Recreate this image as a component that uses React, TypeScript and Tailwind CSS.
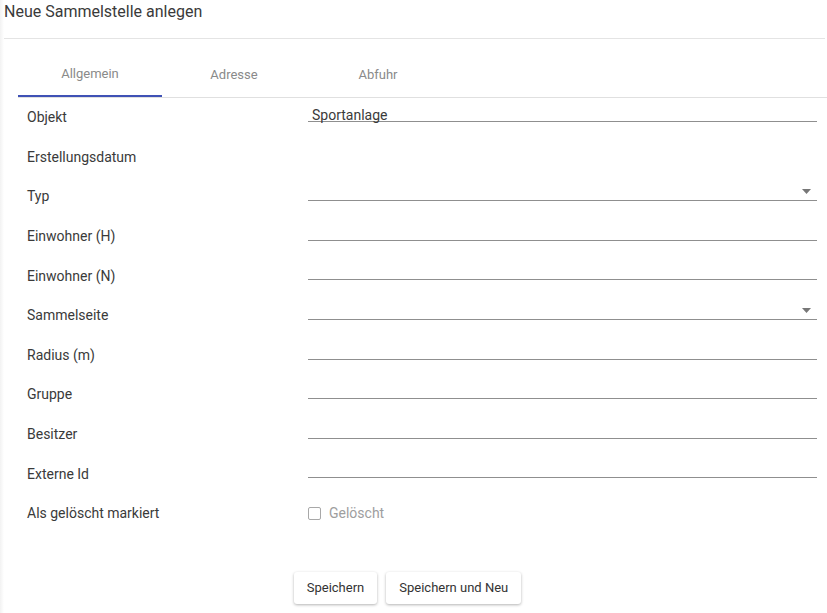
import React from "react";

const rows: { label: string; kind: "text" | "none" | "select" | "check"; value?: string }[] = [
  { label: "Objekt", kind: "text", value: "Sportanlage" },
  { label: "Erstellungsdatum", kind: "none" },
  { label: "Typ", kind: "select" },
  { label: "Einwohner (H)", kind: "text" },
  { label: "Einwohner (N)", kind: "text" },
  { label: "Sammelseite", kind: "select" },
  { label: "Radius (m)", kind: "text" },
  { label: "Gruppe", kind: "text" },
  { label: "Besitzer", kind: "text" },
  { label: "Externe Id", kind: "text" },
  { label: "Als gelöscht markiert", kind: "check" },
];

function Field({ row }: { row: (typeof rows)[number] }) {
  if (row.kind === "none") return <div className="flex-1" />;
  if (row.kind === "check") {
    return (
      <div className="flex flex-1 items-center h-full">
        <span className="w-[13px] h-[13px] border-[1.5px] border-[#a8a8a8] rounded-[2px] bg-white" />
        <span className="ml-[8px] text-[14px] text-[#9e9e9e]">Gelöscht</span>
      </div>
    );
  }
  return (
    <div className="flex-1 self-start h-[24px] border-b border-[#8f8f8f] relative flex items-end">
      {row.value ? (
        <span className="pl-[4px] text-[14px] leading-[14px] text-[#3a3a3a] translate-y-[1px]">{row.value}</span>
      ) : null}
      {row.kind === "select" ? (
        <svg className="absolute right-[6px] bottom-[6px]" width="9" height="5" viewBox="0 0 9 5">
          <path d="M0 0 L9 0 L4.5 5 Z" fill="#777" />
        </svg>
      ) : null}
    </div>
  );
}

export default function App() {
  return (
    <div
      className="w-[827px] h-[613px] bg-white relative overflow-hidden text-[#333]"
      style={{ fontFamily: "Roboto, 'Liberation Sans', sans-serif" }}
    >
      <div className="absolute left-0 top-0 bottom-0 w-[4px] bg-gradient-to-r from-[#f2f2f2] to-white" />
      <div className="ml-[4px] mr-[2px] h-[39px] border-b border-[#e4e4e4] flex items-start pt-[1px]">
        <span className="text-[16px] leading-[22px] text-[#3a3a3a]">Neue Sammelstelle anlegen</span>
      </div>
      <div className="ml-[18px] mt-[14px] h-[45px] border-b border-[#e0e0e0] flex">
        <div className="w-[144px] h-full flex items-center justify-center border-b-2 border-[#3f51b5] text-[13px] text-[#8a8a8a] -mb-[1px]">
          Allgemein
        </div>
        <div className="w-[144px] h-full flex items-center justify-center text-[13px] text-[#8a8a8a]">Adresse</div>
        <div className="w-[144px] h-full flex items-center justify-center text-[13px] text-[#8a8a8a]">Abfuhr</div>
      </div>
      <div className="pl-[27px] pr-[10px] flex flex-col">
        {rows.map((r) => (
          <div key={r.label} className="h-[39.6px] flex items-center">
            <div className="w-[281px] text-[14px] text-[#3a3a3a]">{r.label}</div>
            <Field row={r} />
          </div>
        ))}
      </div>
      <div className="mt-[38px] flex justify-center pr-[12px] gap-[9px]">
        <button className="h-[32px] px-[13px] bg-white rounded-[3px] text-[13px] text-[#333] shadow-[0_1px_3px_rgba(0,0,0,0.3)]">
          Speichern
        </button>
        <button className="h-[32px] px-[13px] bg-white rounded-[3px] text-[13px] text-[#333] shadow-[0_1px_3px_rgba(0,0,0,0.3)]">
          Speichern und Neu
        </button>
      </div>
    </div>
  );
}
